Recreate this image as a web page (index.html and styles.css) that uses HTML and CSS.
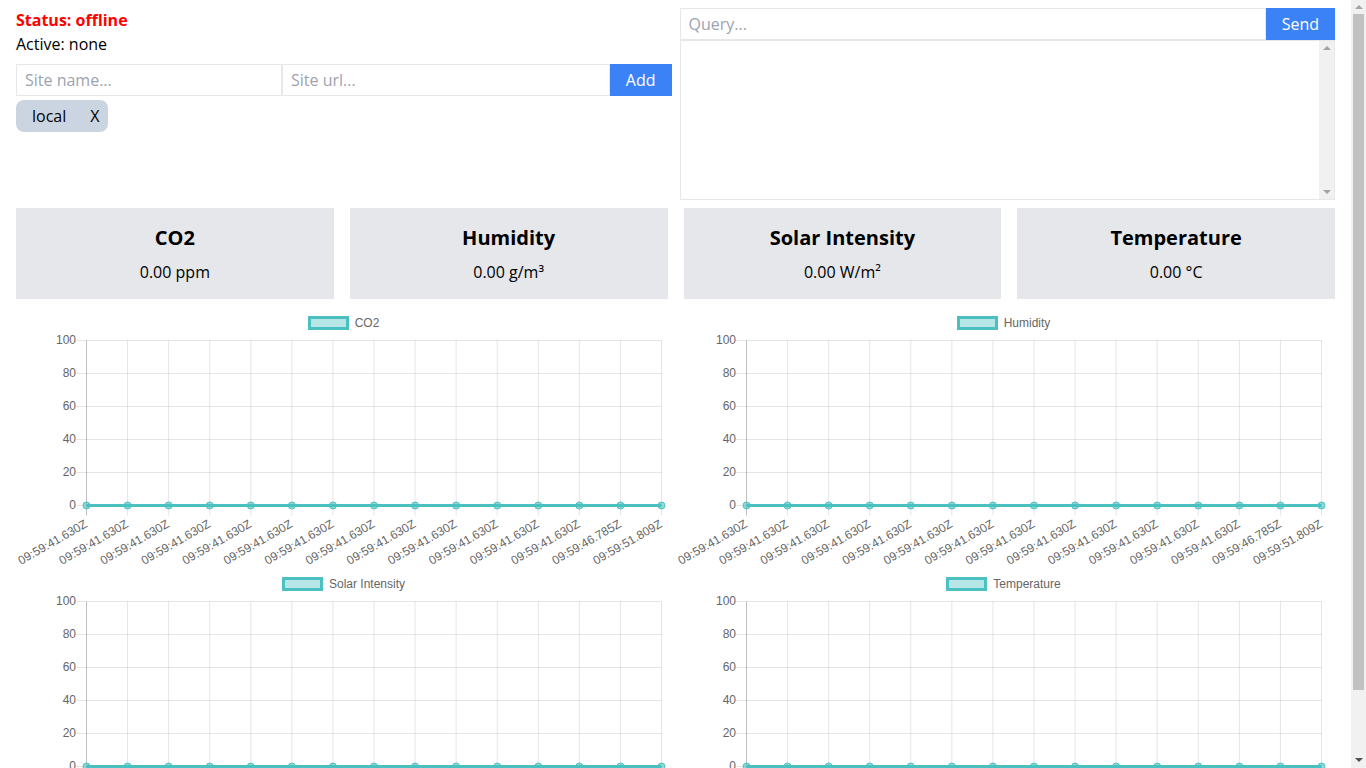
FILE: index.html
```html
<!DOCTYPE html>
<html lang="en">
<head>
<meta charset="utf-8">
<title>Sensor dashboard</title>
<link rel="stylesheet" href="styles.css">
</head>
<body>
<div class="app">
  <div class="top">
    <div class="sites">
      <div class="status">Status: offline</div>
      <div class="active">Active: none</div>
      <div class="add-row">
        <input class="field name" placeholder="Site name...">
        <input class="field url" placeholder="Site url...">
        <button class="btn" type="button">Add</button>
      </div>
      <div class="chips">
        <span class="chip"><span class="chip-label">local</span><button class="chip-x" type="button">X</button></span>
      </div>
    </div>
    <div class="query">
      <div class="query-row">
        <input class="field q" placeholder="Query...">
        <button class="btn" type="button">Send</button>
      </div>
      <div class="output-wrap">
        <textarea class="output"></textarea>
        <div class="sbar sbar-inner" aria-hidden="true">
          <span class="arrow up"></span>
          <span class="arrow down"></span>
        </div>
      </div>
    </div>
  </div>

  <div class="cards">
    <div class="card"><div class="card-title">CO2</div><div class="card-value">0.00 ppm</div></div>
    <div class="card"><div class="card-title">Humidity</div><div class="card-value">0.00 g/m³</div></div>
    <div class="card"><div class="card-title">Solar Intensity</div><div class="card-value">0.00 W/m²</div></div>
    <div class="card"><div class="card-title">Temperature</div><div class="card-value">0.00 °C</div></div>
  </div>

  <div class="charts">
    <div class="chart">
      <div class="legend"><span class="legend-box"></span><span class="legend-text">CO2</span></div>
      <svg class="plot" width="660" height="229"></svg>
    </div>
    <div class="chart">
      <div class="legend"><span class="legend-box"></span><span class="legend-text">Humidity</span></div>
      <svg class="plot" width="660" height="229"></svg>
    </div>
    <div class="chart">
      <div class="legend"><span class="legend-box"></span><span class="legend-text">Solar Intensity</span></div>
      <svg class="plot" width="660" height="229"></svg>
    </div>
    <div class="chart">
      <div class="legend"><span class="legend-box"></span><span class="legend-text">Temperature</span></div>
      <svg class="plot" width="660" height="229"></svg>
    </div>
  </div>
</div>
<div class="sbar sbar-page" aria-hidden="true">
  <span class="arrow up"></span>
  <span class="thumb"></span>
  <span class="arrow down dark"></span>
</div>
<script src="script.js"></script>
</body>
</html>
```

FILE: styles.css
```css
* { box-sizing: border-box; }

html, body {
  margin: 0;
  padding: 0;
  background: #fff;
  overflow-x: hidden;
}

body {
  font-family: "Open Sans", "Noto Sans", sans-serif;
  font-size: 16px;
  line-height: 24px;
  color: #000;
}

.app {
  width: 1351px;
  padding: 8px 16px;
}

.top {
  display: grid;
  grid-template-columns: 1fr 1fr;
  gap: 8px;
}

.status {
  color: #ff0000;
  font-weight: 700;
}

.add-row {
  display: flex;
  margin-top: 8px;
  height: 32px;
}

.field {
  height: 32px;
  border: 1px solid #e5e7eb;
  padding: 0 8px;
  font-family: inherit;
  font-size: 16px;
  color: #000;
  outline: none;
  background: #fff;
  border-radius: 0;
  min-width: 0;
}

.field::placeholder {
  color: #9ca3af;
}

.field.name { width: 266px; }
.field.url { flex: 1; }
.field.q { flex: 1; }

.btn {
  height: 32px;
  border: none;
  background: #3b82f6;
  color: #fff;
  font-family: inherit;
  font-size: 16px;
  padding: 0 16px;
  border-radius: 0;
}

.chips {
  margin-top: 4px;
}

.chip {
  display: inline-flex;
  align-items: center;
  height: 32px;
  background: #cbd5e1;
  border-radius: 8px;
  padding: 0 0 0 16px;
}

.chip-x {
  border: none;
  background: transparent;
  font-family: inherit;
  font-size: 16px;
  color: #000;
  padding: 0 8px 0 24px;
  height: 32px;
}

.query-row {
  display: flex;
  height: 32px;
}

.output-wrap {
  position: relative;
}

.output {
  display: block;
  width: 100%;
  height: 160px;
  border: 1px solid #e5e7eb;
  resize: none;
  overflow-y: scroll;
  font-family: inherit;
  font-size: 16px;
  margin: 0;
  outline: none;
}

/* drawn scrollbars */
.sbar {
  display: flex;
  flex-direction: column;
  align-items: center;
  background: #f1f1f1;
  width: 15px;
}

.sbar-inner {
  position: absolute;
  top: 1px;
  right: 1px;
  bottom: 1px;
  justify-content: space-between;
  padding: 5px 0;
}

.sbar-page {
  position: fixed;
  top: 0;
  right: 0;
  height: 100vh;
  padding: 5px 0 6px;
}

.arrow {
  width: 0;
  height: 0;
  border-left: 4px solid transparent;
  border-right: 4px solid transparent;
}

.arrow.up { border-bottom: 4px solid #a3a3a3; }
.arrow.down { border-top: 4px solid #a3a3a3; }
.arrow.down.dark { border-top-color: #505050; margin-top: auto; }

.thumb {
  width: 11px;
  height: 676px;
  margin-top: 5px;
  background: #c1c1c1;
}

.cards {
  display: grid;
  grid-template-columns: repeat(4, 1fr);
  gap: 16px;
  margin-top: 8px;
}

.card {
  background: #e5e7eb;
  text-align: center;
  padding: 16px 0 15px;
}

.card-title {
  font-size: 20px;
  line-height: 28px;
  font-weight: 700;
  margin-bottom: 8px;
}

.card-value {
  font-size: 16px;
  line-height: 24px;
}

.charts {
  display: grid;
  grid-template-columns: 1fr 1fr;
  margin-top: 8px;
}

.chart {
  height: 261px;
}

.legend {
  display: flex;
  justify-content: center;
  align-items: center;
  height: 32px;
  padding: 10px 5px 10px 0;
  font-family: "Liberation Sans", Arial, sans-serif;
  font-size: 12px;
  line-height: 12px;
  color: #666;
}

.legend-box {
  width: 41px;
  height: 14px;
  border: 3px solid rgb(75, 192, 192);
  background: rgba(75, 192, 192, 0.4);
  margin-right: 6px;
}

.plot {
  display: block;
  overflow: visible;
}

.plot .grid {
  stroke: rgba(0, 0, 0, 0.1);
  stroke-width: 1;
}

.plot .axis {
  stroke: rgba(0, 0, 0, 0.25);
  stroke-width: 1;
}

.plot text {
  font-family: "Liberation Sans", Arial, sans-serif;
  font-size: 12px;
  fill: #666;
  text-anchor: end;
  dominant-baseline: middle;
}

.plot .line {
  fill: none;
  stroke: rgb(75, 192, 192);
  stroke-width: 3;
}

.plot .pt {
  fill: rgba(75, 192, 192, 0.6);
  stroke: rgb(75, 192, 192);
  stroke-width: 1;
}
```

FILE: script.js
```js
(function () {
  var labels = [];
  for (var k = 0; k < 13; k++) labels.push('09:59:41.630Z');
  labels.push('09:59:46.785Z');
  labels.push('09:59:51.809Z');

  var x0 = 70.5, x1 = 645.5;
  var step = (x1 - x0) / 14;
  var yTop = 1.5, ystep = 33;
  var yZero = yTop + 5 * ystep;

  var plots = document.querySelectorAll('.plot');
  for (var p = 0; p < plots.length; p++) {
    var h = '';
    for (var i = 0; i <= 5; i++) {
      var y = yTop + i * ystep;
      h += '<line class="grid" x1="' + (x0 - 10) + '" y1="' + y + '" x2="' + x1 + '" y2="' + y + '"/>';
      h += '<text x="60" y="' + y + '">' + (100 - 20 * i) + '</text>';
    }
    for (var j = 0; j < 15; j++) {
      var x = x0 + j * step;
      h += '<line class="' + (j === 0 ? 'axis' : 'grid') + '" x1="' + x + '" y1="' + yTop + '" x2="' + x + '" y2="' + (yZero + 10) + '"/>';
      h += '<text transform="translate(' + x + ' ' + (yZero + 18) + ') rotate(-30)">' + labels[j] + '</text>';
    }
    h += '<line class="line" x1="' + x0 + '" y1="' + yZero + '" x2="' + x1 + '" y2="' + yZero + '"/>';
    for (var m = 0; m < 15; m++) {
      h += '<circle class="pt" cx="' + (x0 + m * step) + '" cy="' + yZero + '" r="3.5"/>';
    }
    plots[p].innerHTML = h;
  }
})();
```
